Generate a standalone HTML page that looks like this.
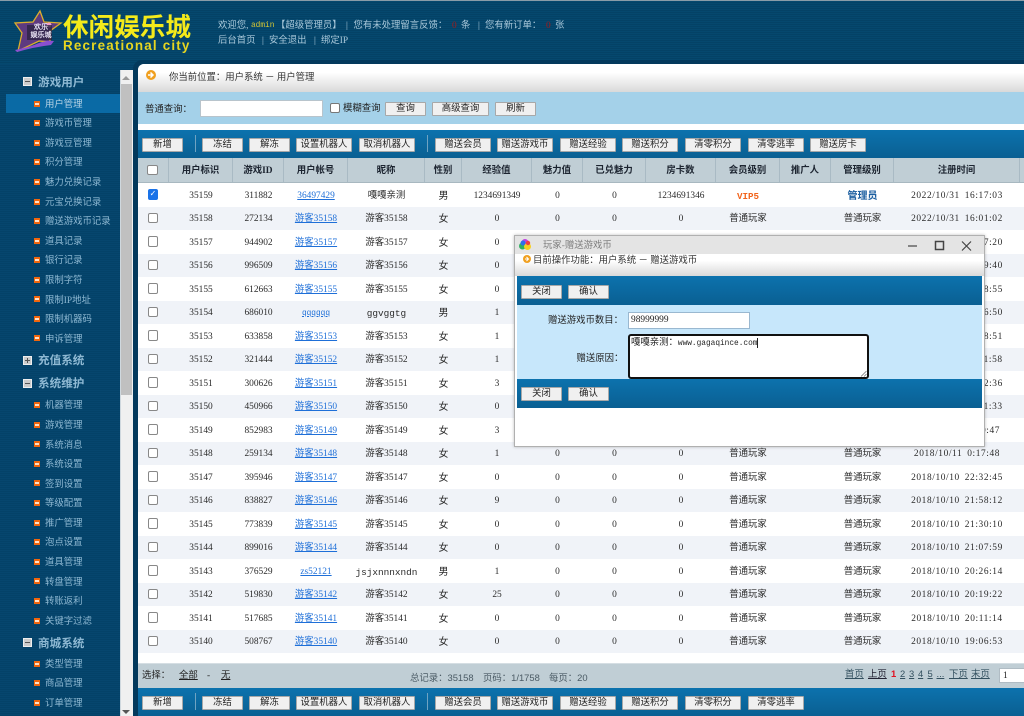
<!DOCTYPE html>
<html lang="zh"><head><meta charset="utf-8"><title>休闲娱乐城</title>
<style>
html{background:#06446c}
html,body{margin:0;padding:0;width:1024px;height:716px;overflow:hidden}
body{position:relative;background:#06446c;font:9.4px/1 "Liberation Serif","WenQuanYi Zen Hei","Noto Sans CJK SC",serif;color:#333;filter:blur(.3px)}
div,span,a,b,i,input,button{box-sizing:border-box}
.abs,.t,.btn{position:absolute}
#bg{left:0;top:0;width:1024px;height:716px;background:repeating-linear-gradient(180deg,#06466e 0,#06466e 1px,#044268 1px,#044268 2px)}
#top{left:0;top:0;width:1024px;height:64px;border-top:1px solid #8a9ca8;background:repeating-linear-gradient(180deg,#05486e 0,#05486e 1px,#044266 1px,#044266 2px)}
.t{white-space:nowrap}
.h{color:#a9c8da}
.mono{font-family:"Liberation Mono",monospace;font-size:7.8px}
.side{color:#8fb9d3;left:45px;font-size:9.4px;margin-top:1.5px}
.side2{color:#8fb9d3;left:38px;font-size:11.6px;font-weight:bold;margin-top:1px}
.bul{position:absolute;left:34px;width:6px;height:6px;background:#f0660e}
.bul:after{content:"";position:absolute;left:1px;top:2px;width:4px;height:2px;background:#fde0c8}
.box{position:absolute;left:23px;width:9px;height:9px;background:#ccc;border:1px solid #eee}
.box:after{content:"";position:absolute;left:1px;top:3px;width:5px;height:1px;background:#555}
.box.p:before{content:"";position:absolute;left:3px;top:1px;width:1px;height:5px;background:#555}
.btn{height:14px;background:#f0f0f0;border:1px solid #a8a8a8;border-radius:1px;font:9.4px/12px "Liberation Serif","WenQuanYi Zen Hei","Noto Sans CJK SC",serif;color:#222;text-align:center;padding:0;white-space:nowrap}
.tb{position:absolute;left:0;width:0;height:0}
.tb .btn{top:0}
.bar{background:linear-gradient(180deg,#0c72ad,#0a5f92)}
.sep{position:absolute;width:1px;background:#6fa3c2}
#head{position:absolute;left:138px;top:158px;width:886px;height:25px;background:#c0ced5;display:flex;border-bottom:1px solid #a8b8c0}
#head b{display:block;height:24px;line-height:27px;text-align:center;border-right:1px solid #a9bac4;font-weight:bold;color:#1c2430;font-size:9.4px;flex:none}
#rows{position:absolute;left:138px;top:183px;width:886px}
.r{display:flex;height:23.5px;line-height:23.5px}
.r:nth-child(even){background:#f0f3f8}
.r i{display:block;flex:none;padding-top:1.5px;font-style:normal;text-align:center;font-size:9.4px;color:#2a2a2a;white-space:nowrap}
.r a{color:#1e6fd8;text-decoration:underline}
.c0{width:31px}.c1{width:64px}.c2{width:51px}.c3{width:64px}.c4{width:77px}.c5{width:37px}.c6{width:70px}.c7{width:51px}.c8{width:63px}.c9{width:70px}.c10{width:64px}.c11{width:51px}.c12{width:63px}.c13{width:126px}.c14{width:4px}
.r i:nth-child(1){width:31px}.r i:nth-child(2){width:64px}.r i:nth-child(3){width:51px}.r i:nth-child(4){width:64px}.r i:nth-child(5){width:77px}.r i:nth-child(6){width:37px;font-size:10px}.r i:nth-child(7){width:70px}.r i:nth-child(8){width:51px}.r i:nth-child(9){width:63px}.r i:nth-child(10){width:70px}.r i:nth-child(11){width:64px}.r i:nth-child(12){width:51px}.r i:nth-child(13){width:63px}.r i:nth-child(14){width:126px;letter-spacing:.6px;word-spacing:2px}
.cb{display:inline-block;width:10.500px;height:10.500px;border:1px solid #888;border-radius:2px;background:#fff;vertical-align:middle;margin:-2px 0 0 -1px}
.pg{position:absolute;top:669px;font:9.4px/1 "Liberation Sans","WenQuanYi Zen Hei",sans-serif;color:#33505f;text-decoration:underline;white-space:nowrap}
</style></head><body>
<div id="bg" class="abs"></div>
<div id="top" class="abs"></div>

<svg class="abs" style="left:12px;top:8px" width="52" height="46" viewBox="0 0 52 46">
<polygon points="28,3 32,14 49,15 38,23 38,34 27,33 6,43 10,25 3,15 21,14" fill="#5e3a80" stroke="#dcae2c" stroke-width="1.300"/>
<path d="M3 42 Q18 39 27 35 Q35 32 42 33 L39 37 Q22 39 5 44Z" fill="#8a4fd0"/>
<circle cx="37" cy="17" r="2.500" fill="#f0a0c8"/>
<rect x="15" y="17" width="25" height="15" fill="#2c2444" opacity=".8"/>
</svg>
<div class="t" style="left:29px;top:24px;width:24px;text-align:center;font:bold 7px/1 'WenQuanYi Zen Hei',sans-serif;color:#e9e4f5">欢乐</div>
<div class="t" style="left:29px;top:32px;width:24px;text-align:center;font:bold 7px/1 'WenQuanYi Zen Hei',sans-serif;color:#e9e4f5">娱乐城</div>
<div class="t" style="left:63px;top:13px;font:bold 25.6px/1 'Noto Sans CJK SC',sans-serif;color:#f4ea1a">休闲娱乐城</div>
<div class="t" style="left:63px;top:39px;font:bold 13.4px/1 'Liberation Sans',sans-serif;color:#e6d620;letter-spacing:1.2px">Recreational city</div>

<div class="t h" style="left:218px;top:22px">欢迎您,</div>
<div class="t mono" style="left:251px;top:23px;color:#d6c733">admin</div>
<div class="t h" style="left:276px;top:22px">【超级管理员】</div>
<div class="t h" style="left:346px;top:22px">|</div>
<div class="t h" style="left:353.500px;top:22px">您有未处理留言反馈：</div>
<div class="t" style="left:452px;top:22px;color:#a01c1c">0</div>
<div class="t h" style="left:461px;top:22px">条</div>
<div class="t h" style="left:478px;top:22px">|</div>
<div class="t h" style="left:485px;top:22px">您有新订单：</div>
<div class="t" style="left:546px;top:22px;color:#a01c1c">0</div>
<div class="t h" style="left:555px;top:22px">张</div>
<div class="t h" style="left:218px;top:37px">后台首页</div>
<div class="t h" style="left:262px;top:37px">|</div>
<div class="t h" style="left:269px;top:37px">安全退出</div>
<div class="t h" style="left:314px;top:37px">|</div>
<div class="t h" style="left:321px;top:37px">绑定IP</div>

<!-- sidebar -->
<div class="abs" style="left:6px;top:94px;width:114px;height:19px;background:#0a6aa5"></div>
<div class="box" style="top:77px"></div><div class="t side2" style="top:76px">游戏用户</div>
<span class="bul" style="top:101px"></span><div class="t side" style="top:99px;color:#b8d4e6">用户管理</div>
<span class="bul" style="top:120px"></span><div class="t side" style="top:118px">游戏币管理</div>
<span class="bul" style="top:140px"></span><div class="t side" style="top:138px">游戏豆管理</div>
<span class="bul" style="top:159px"></span><div class="t side" style="top:157px">积分管理</div>
<span class="bul" style="top:179px"></span><div class="t side" style="top:177px">魅力兑换记录</div>
<span class="bul" style="top:199px"></span><div class="t side" style="top:197px">元宝兑换记录</div>
<span class="bul" style="top:218px"></span><div class="t side" style="top:216px">赠送游戏币记录</div>
<span class="bul" style="top:238px"></span><div class="t side" style="top:236px">道具记录</div>
<span class="bul" style="top:257px"></span><div class="t side" style="top:255px">银行记录</div>
<span class="bul" style="top:277px"></span><div class="t side" style="top:275px">限制字符</div>
<span class="bul" style="top:296px"></span><div class="t side" style="top:295px">限制IP地址</div>
<span class="bul" style="top:316px"></span><div class="t side" style="top:314px">限制机器码</div>
<span class="bul" style="top:335px"></span><div class="t side" style="top:334px">申诉管理</div>
<div class="box p" style="top:356px"></div><div class="t side2" style="top:354px">充值系统</div>
<div class="box" style="top:379px"></div><div class="t side2" style="top:377px">系统维护</div>
<span class="bul" style="top:402px"></span><div class="t side" style="top:400px">机器管理</div>
<span class="bul" style="top:422px"></span><div class="t side" style="top:420px">游戏管理</div>
<span class="bul" style="top:441px"></span><div class="t side" style="top:440px">系统消息</div>
<span class="bul" style="top:461px"></span><div class="t side" style="top:459px">系统设置</div>
<span class="bul" style="top:480px"></span><div class="t side" style="top:479px">签到设置</div>
<span class="bul" style="top:500px"></span><div class="t side" style="top:498px">等级配置</div>
<span class="bul" style="top:520px"></span><div class="t side" style="top:518px">推广管理</div>
<span class="bul" style="top:539px"></span><div class="t side" style="top:537px">泡点设置</div>
<span class="bul" style="top:559px"></span><div class="t side" style="top:557px">道具管理</div>
<span class="bul" style="top:578px"></span><div class="t side" style="top:577px">转盘管理</div>
<span class="bul" style="top:598px"></span><div class="t side" style="top:596px">转账返利</div>
<span class="bul" style="top:618px"></span><div class="t side" style="top:616px">关键字过滤</div>
<div class="box" style="top:638px"></div><div class="t side2" style="top:637px">商城系统</div>
<span class="bul" style="top:661px"></span><div class="t side" style="top:659px">类型管理</div>
<span class="bul" style="top:680px"></span><div class="t side" style="top:678px">商品管理</div>
<span class="bul" style="top:700px"></span><div class="t side" style="top:698px">订单管理</div>

<!-- scrollbar -->
<div class="abs" style="left:120px;top:70px;width:13px;height:646px;background:#f0f0f0;border-left:1px solid #cfd8de"></div>
<div class="abs" style="left:121px;top:84px;width:11px;height:311px;background:#c0c0c0"></div>
<div class="abs" style="left:122px;top:76px;border:4px solid transparent;border-top:0;border-bottom:4px solid #999"></div>
<div class="abs" style="left:122px;top:710px;border:4px solid transparent;border-bottom:0;border-top:4px solid #555"></div>

<!-- main panel -->
<div class="abs" style="left:133px;top:60px;width:900px;height:670px;background:#03395c;border-radius:9px 0 0 0"></div>
<div class="abs" style="left:138px;top:64px;width:886px;height:652px;background:#fff;border-radius:6px 0 0 0"></div>
<div class="abs" style="left:138px;top:64px;width:886px;height:28px;border-radius:6px 0 0 0;background:linear-gradient(180deg,#fff 0,#fff 30%,#d9d9d9 100%)"></div>
<svg class="abs" style="left:145px;top:69px" width="12" height="12" viewBox="0 0 12 12"><circle cx="6" cy="6" r="5" fill="#f0a020"/><path d="M3 6h4M5.500 3.500 8 6 5.500 8.500" fill="none" stroke="#fff" stroke-width="1.500"/></svg>
<div class="t" style="left:169px;top:73.500px;color:#333">你当前位置：用户系统 － 用户管理</div>

<div class="abs" style="left:138px;top:92px;width:886px;height:32px;background:#a4d1e9"></div>
<div class="t" style="left:145px;top:105.500px;color:#222">普通查询：</div>
<div class="abs" style="left:200px;top:100px;width:123px;height:17px;background:#fff;border:1px solid #b8c4cc"></div>
<div class="abs" style="left:330px;top:103px;width:10px;height:10px;background:#fff;border:1px solid #777;border-radius:2px"></div>
<div class="t" style="left:343px;top:105px;color:#222">模糊查询</div>
<button class="btn" style="left:385px;top:102px;width:41px">查询</button>
<button class="btn" style="left:432px;top:102px;width:57px">高级查询</button>
<button class="btn" style="left:495px;top:102px;width:41px">刷新</button>

<!-- toolbar top -->
<div class="abs bar" style="left:138px;top:130px;width:886px;height:28px"></div>
<div class="sep" style="left:195px;top:135px;height:17px"></div>
<div class="sep" style="left:427px;top:135px;height:17px"></div>
<div class="tb" style="top:138px">
<button class="btn" style="left:142px;width:41px">新增</button>
<button class="btn" style="left:202px;width:41px">冻结</button>
<button class="btn" style="left:249px;width:41px">解冻</button>
<button class="btn" style="left:296px;width:56px">设置机器人</button>
<button class="btn" style="left:359px;width:56px">取消机器人</button>
<button class="btn" style="left:435px;width:56px">赠送会员</button>
<button class="btn" style="left:497px;width:56px">赠送游戏币</button>
<button class="btn" style="left:560px;width:56px">赠送经验</button>
<button class="btn" style="left:622px;width:56px">赠送积分</button>
<button class="btn" style="left:685px;width:56px">清零积分</button>
<button class="btn" style="left:748px;width:56px">清零逃率</button>
<button class="btn" style="left:810px;width:56px">赠送房卡</button>
</div>

<!-- table head -->
<div id="head">
<b class="c0"><span class="cb"></span></b><b class="c1">用户标识</b><b class="c2">游戏ID</b><b class="c3">用户帐号</b><b class="c4">昵称</b><b class="c5">性别</b><b class="c6">经验值</b><b class="c7">魅力值</b><b class="c8">已兑魅力</b><b class="c9">房卡数</b><b class="c10">会员级别</b><b class="c11">推广人</b><b class="c12">管理级别</b><b class="c13">注册时间</b><b class="c14" style="border:0"></b>
</div>

<div id="rows">
<div class="r"><i><span class="cb" style="background:#1a73e8;border-color:#1a73e8;color:#fff;font:bold 8px/8px 'DejaVu Sans',sans-serif">✓</span></i><i>35159</i><i>311882</i><i><a>36497429</a></i><i>嘎嘎亲测</i><i>男</i><i>1234691349</i><i>0</i><i>0</i><i>1234691346</i><i style="color:#f2641c;font:bold 9.2px/23.5px 'Liberation Mono',monospace">VIP5</i><i></i><i style="color:#1d5fa0;font-weight:bold;font-size:10px">管理员</i><i>2022/10/31 16:17:03</i></div>
<div class="r"><i><span class="cb"></span></i><i>35158</i><i>272134</i><i><a>游客35158</a></i><i>游客35158</i><i>女</i><i>0</i><i>0</i><i>0</i><i>0</i><i>普通玩家</i><i></i><i>普通玩家</i><i>2022/10/31 16:01:02</i></div>
<div class="r"><i><span class="cb"></span></i><i>35157</i><i>944902</i><i><a>游客35157</a></i><i>游客35157</i><i>女</i><i>0</i><i>0</i><i>0</i><i>0</i><i>普通玩家</i><i></i><i>普通玩家</i><i>2022/10/31 15:57:20</i></div>
<div class="r"><i><span class="cb"></span></i><i>35156</i><i>996509</i><i><a>游客35156</a></i><i>游客35156</i><i>女</i><i>0</i><i>0</i><i>0</i><i>0</i><i>普通玩家</i><i></i><i>普通玩家</i><i>2022/10/31 15:49:40</i></div>
<div class="r"><i><span class="cb"></span></i><i>35155</i><i>612663</i><i><a>游客35155</a></i><i>游客35155</i><i>女</i><i>0</i><i>0</i><i>0</i><i>0</i><i>普通玩家</i><i></i><i>普通玩家</i><i>2022/10/31 15:38:55</i></div>
<div class="r"><i><span class="cb"></span></i><i>35154</i><i>686010</i><i><a class="mono">qqqqqq</a></i><i class="mono">ggvggtg</i><i>男</i><i>1</i><i>0</i><i>0</i><i>0</i><i>普通玩家</i><i></i><i>普通玩家</i><i>2022/10/31 15:26:50</i></div>
<div class="r"><i><span class="cb"></span></i><i>35153</i><i>633858</i><i><a>游客35153</a></i><i>游客35153</i><i>女</i><i>1</i><i>0</i><i>0</i><i>0</i><i>普通玩家</i><i></i><i>普通玩家</i><i>2022/10/31 15:18:51</i></div>
<div class="r"><i><span class="cb"></span></i><i>35152</i><i>321444</i><i><a>游客35152</a></i><i>游客35152</i><i>女</i><i>1</i><i>0</i><i>0</i><i>0</i><i>普通玩家</i><i></i><i>普通玩家</i><i>2022/10/31 15:11:58</i></div>
<div class="r"><i><span class="cb"></span></i><i>35151</i><i>300626</i><i><a>游客35151</a></i><i>游客35151</i><i>女</i><i>3</i><i>0</i><i>0</i><i>0</i><i>普通玩家</i><i></i><i>普通玩家</i><i>2022/10/31 15:02:36</i></div>
<div class="r"><i><span class="cb"></span></i><i>35150</i><i>450966</i><i><a>游客35150</a></i><i>游客35150</i><i>女</i><i>0</i><i>0</i><i>0</i><i>0</i><i>普通玩家</i><i></i><i>普通玩家</i><i>2018/10/12 10:11:33</i></div>
<div class="r"><i><span class="cb"></span></i><i>35149</i><i>852983</i><i><a>游客35149</a></i><i>游客35149</i><i>女</i><i>3</i><i>0</i><i>0</i><i>0</i><i>普通玩家</i><i></i><i>普通玩家</i><i>2018/10/11 9:30:47</i></div>
<div class="r"><i><span class="cb"></span></i><i>35148</i><i>259134</i><i><a>游客35148</a></i><i>游客35148</i><i>女</i><i>1</i><i>0</i><i>0</i><i>0</i><i>普通玩家</i><i></i><i>普通玩家</i><i>2018/10/11 0:17:48</i></div>
<div class="r"><i><span class="cb"></span></i><i>35147</i><i>395946</i><i><a>游客35147</a></i><i>游客35147</i><i>女</i><i>0</i><i>0</i><i>0</i><i>0</i><i>普通玩家</i><i></i><i>普通玩家</i><i>2018/10/10 22:32:45</i></div>
<div class="r"><i><span class="cb"></span></i><i>35146</i><i>838827</i><i><a>游客35146</a></i><i>游客35146</i><i>女</i><i>9</i><i>0</i><i>0</i><i>0</i><i>普通玩家</i><i></i><i>普通玩家</i><i>2018/10/10 21:58:12</i></div>
<div class="r"><i><span class="cb"></span></i><i>35145</i><i>773839</i><i><a>游客35145</a></i><i>游客35145</i><i>女</i><i>0</i><i>0</i><i>0</i><i>0</i><i>普通玩家</i><i></i><i>普通玩家</i><i>2018/10/10 21:30:10</i></div>
<div class="r"><i><span class="cb"></span></i><i>35144</i><i>899016</i><i><a>游客35144</a></i><i>游客35144</i><i>女</i><i>0</i><i>0</i><i>0</i><i>0</i><i>普通玩家</i><i></i><i>普通玩家</i><i>2018/10/10 21:07:59</i></div>
<div class="r"><i><span class="cb"></span></i><i>35143</i><i>376529</i><i><a>zs52121</a></i><i class="mono">jsjxnnnxndn</i><i>男</i><i>1</i><i>0</i><i>0</i><i>0</i><i>普通玩家</i><i></i><i>普通玩家</i><i>2018/10/10 20:26:14</i></div>
<div class="r"><i><span class="cb"></span></i><i>35142</i><i>519830</i><i><a>游客35142</a></i><i>游客35142</i><i>女</i><i>25</i><i>0</i><i>0</i><i>0</i><i>普通玩家</i><i></i><i>普通玩家</i><i>2018/10/10 20:19:22</i></div>
<div class="r"><i><span class="cb"></span></i><i>35141</i><i>517685</i><i><a>游客35141</a></i><i>游客35141</i><i>女</i><i>0</i><i>0</i><i>0</i><i>0</i><i>普通玩家</i><i></i><i>普通玩家</i><i>2018/10/10 20:11:14</i></div>
<div class="r"><i><span class="cb"></span></i><i>35140</i><i>508767</i><i><a>游客35140</a></i><i>游客35140</i><i>女</i><i>0</i><i>0</i><i>0</i><i>0</i><i>普通玩家</i><i></i><i>普通玩家</i><i>2018/10/10 19:06:53</i></div>
</div>

<!-- footer -->
<div class="abs" style="left:138px;top:663px;width:886px;height:25px;background:#c0ced5;border-top:1px solid #d5dee3"></div>
<div class="t" style="left:142px;top:672px;color:#222">选择：</div>
<div class="t" style="left:179px;top:672px;color:#222;text-decoration:underline">全部</div>
<div class="t" style="left:207px;top:672px;color:#222">-</div>
<div class="t" style="left:221px;top:672px;color:#222;text-decoration:underline">无</div>
<div class="t" style="left:410px;top:673px;font:9.4px/1 'Liberation Sans','WenQuanYi Zen Hei',sans-serif;color:#4a5a64">总记录：35158</div>
<div class="t" style="left:483px;top:673px;font:9.4px/1 'Liberation Sans','WenQuanYi Zen Hei',sans-serif;color:#4a5a64">页码：1/1758</div>
<div class="t" style="left:549px;top:673px;font:9.4px/1 'Liberation Sans','WenQuanYi Zen Hei',sans-serif;color:#4a5a64">每页：20</div>
<span class="pg" style="left:845px">首页</span><span class="pg" style="left:868px;color:#223">上页</span><span class="pg" style="left:891px;color:#e01020;font-weight:bold;text-decoration:none">1</span><span class="pg" style="left:900px">2</span><span class="pg" style="left:909px">3</span><span class="pg" style="left:918px">4</span><span class="pg" style="left:927.500px">5</span><span class="pg" style="left:936.500px">...</span><span class="pg" style="left:949px">下页</span><span class="pg" style="left:971px">末页</span>
<div class="abs" style="left:999px;top:668px;width:30px;height:15px;background:#fff;border:1px solid #b0bcc4;padding:3px 3px;color:#222">1</div>

<div class="abs bar" style="left:138px;top:688px;width:886px;height:28px"></div>
<div class="sep" style="left:195px;top:693px;height:17px"></div>
<div class="sep" style="left:427px;top:693px;height:17px"></div>
<div class="tb" style="top:696px">
<button class="btn" style="left:142px;width:41px">新增</button>
<button class="btn" style="left:202px;width:41px">冻结</button>
<button class="btn" style="left:249px;width:41px">解冻</button>
<button class="btn" style="left:296px;width:56px">设置机器人</button>
<button class="btn" style="left:359px;width:56px">取消机器人</button>
<button class="btn" style="left:435px;width:56px">赠送会员</button>
<button class="btn" style="left:497px;width:56px">赠送游戏币</button>
<button class="btn" style="left:560px;width:56px">赠送经验</button>
<button class="btn" style="left:622px;width:56px">赠送积分</button>
<button class="btn" style="left:685px;width:56px">清零积分</button>
<button class="btn" style="left:748px;width:56px">清零逃率</button>
</div>

<!-- dialog -->
<div class="abs" style="left:514px;top:235px;width:471px;height:212px;background:#fff;border:1px solid #b0b0b0;box-shadow:0 0 3px rgba(0,0,0,.25)"></div>
<div class="abs" style="left:515px;top:236px;width:469px;height:18px;background:#e4e4e4"></div>
<svg class="abs" style="left:518px;top:238px" width="14" height="14" viewBox="0 0 14 14"><circle cx="7" cy="4.500" r="3.500" fill="#c040e0"/><circle cx="4.500" cy="8" r="3.500" fill="#30b060"/><circle cx="9.500" cy="8.500" r="3.500" fill="#f8d020"/><circle cx="5" cy="5" r="2.500" fill="#3070e8"/><circle cx="10" cy="5" r="2.200" fill="#f04040"/></svg>
<div class="t" style="left:543px;top:241.500px;color:#7d7d7d">玩家-赠送游戏币</div>
<svg class="abs" style="left:905px;top:238px" width="70" height="15" viewBox="0 0 70 15" fill="none" stroke="#444" stroke-width="1.200"><path d="M3 8H12"/><path d="M30.500 3.500H38.500V11.500H30.500Z" stroke-width="1.500"/><path d="M57 3.500 66 12.500M66 3.500 57 12.500"/></svg>

<div class="abs" style="left:515px;top:254px;width:469px;height:22px;background:linear-gradient(180deg,#fff 0,#fff 30%,#d9d9d9 100%)"></div>
<svg class="abs" style="left:522px;top:254px" width="10" height="10" viewBox="0 0 10 10"><circle cx="5" cy="5" r="4" fill="#f0a020"/><path d="M3 5h3M4.500 3 6.500 5 4.500 7" fill="none" stroke="#fff"/></svg>
<div class="t" style="left:533px;top:257px;color:#333">目前操作功能：用户系统 － 赠送游戏币</div>

<div class="abs bar" style="left:517px;top:276px;width:465px;height:29px"></div>
<button class="btn" style="left:521px;top:285px;width:41px">关闭</button>
<button class="btn" style="left:568px;top:285px;width:41px">确认</button>
<div class="abs" style="left:517px;top:305px;width:465px;height:74px;background:#c7e7fb"></div>
<div class="t" style="left:548px;top:317px;color:#222">赠送游戏币数目：</div>
<div class="abs" style="left:628px;top:312px;width:122px;height:17px;background:#fff;border:1px solid #9ab8d0;padding:3px 2px;color:#222">98999999</div>
<div class="t" style="left:576.500px;top:354.500px;color:#222">赠送原因：</div>
<div class="abs" style="left:628px;top:334px;width:241px;height:45px;background:#fff;border:2px solid #111;border-radius:3px;padding:3px 1px;color:#222">嘎嘎亲测：<span class="mono">www.gagaqince.com</span><span style="border-left:1px solid #222"></span></div>
<svg class="abs" style="left:860px;top:370px" width="7" height="7" viewBox="0 0 7 7" fill="none" stroke="#777" stroke-width=".8"><path d="M1 6.500 6.500 1M4 6.500 6.500 4"/></svg>
<div class="abs bar" style="left:517px;top:379px;width:465px;height:29px"></div>
<button class="btn" style="left:521px;top:387px;width:41px">关闭</button>
<button class="btn" style="left:568px;top:387px;width:41px">确认</button>
</body></html>
